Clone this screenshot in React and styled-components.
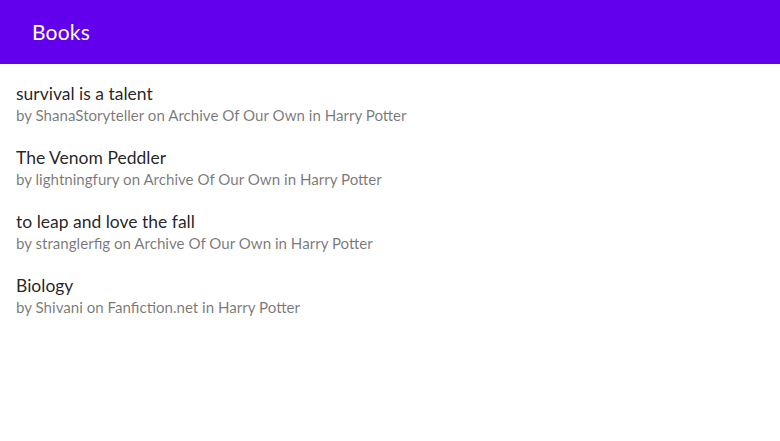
import React from "react";
import styled, { createGlobalStyle } from "styled-components";

const GlobalStyle = createGlobalStyle`
  body {
    margin: 0;
    background: #fff;
    font-family: Lato, "Noto Sans", sans-serif;
  }
`;

const TopBar = styled.header`
  height: 64px;
  background: #6200ee;
  display: flex;
  align-items: center;
  padding: 0 32px;
`;

const Title = styled.h1`
  margin: 0 0 2px;
  color: #fff;
  font-size: 21px;
  font-weight: 400;
  letter-spacing: 0.2px;
`;

const List = styled.ul`
  list-style: none;
  margin: 0;
  padding: 8px 0 0;
`;

const Item = styled.li`
  height: 64px;
  padding: 0 16px;
  display: flex;
  flex-direction: column;
  justify-content: center;
`;

const BookName = styled.span`
  font-size: 17.5px;
  line-height: 22px;
  color: rgba(0, 0, 0, 0.87);
`;

const Meta = styled.span`
  font-size: 15.1px;
  line-height: 20px;
  color: rgba(0, 0, 0, 0.54);
`;

const books = [
  { title: "survival is a talent", author: "ShanaStoryteller", site: "Archive Of Our Own", fandom: "Harry Potter" },
  { title: "The Venom Peddler", author: "lightningfury", site: "Archive Of Our Own", fandom: "Harry Potter" },
  { title: "to leap and love the fall", author: "stranglerfig", site: "Archive Of Our Own", fandom: "Harry Potter" },
  { title: "Biology", author: "Shivani", site: "Fanfiction.net", fandom: "Harry Potter" },
];

export default function App() {
  return (
    <>
      <GlobalStyle />
      <TopBar>
        <Title>Books</Title>
      </TopBar>
      <List>
        {books.map((b) => (
          <Item key={b.title}>
            <BookName>{b.title}</BookName>
            <Meta>
              by {b.author} on {b.site} in {b.fandom}
            </Meta>
          </Item>
        ))}
      </List>
    </>
  );
}
